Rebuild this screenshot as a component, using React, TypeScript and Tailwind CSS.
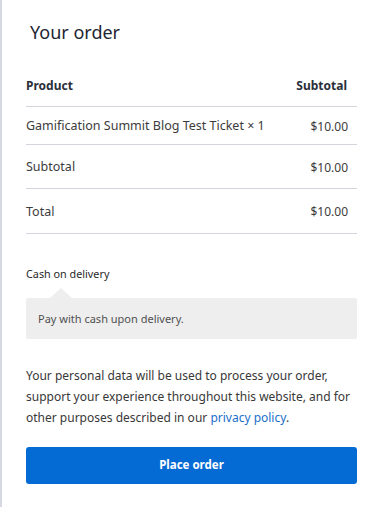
export default function App() {
  return (
    <div className="min-h-[507px] w-[387px] bg-white border-l-2 border-[#d5d8e0] font-['Noto_Sans',sans-serif] text-[#3c3c3c]">
      <div className="pl-[24px] pr-[30px] pt-[18px]">
        <h3 className="pl-[4px] text-[18px] leading-[28px] text-[#1e2533]">Your order</h3>

        <table className="mt-[18px] w-full border-collapse text-[12.5px]">
          <thead>
            <tr className="border-b border-[#d3d4dc]">
              <th className="h-[42px] pt-[2px] text-left text-[12px] font-bold text-[#2a2f3a]">Product</th>
              <th className="h-[42px] pt-[2px] pr-[10px] text-right text-[12px] font-bold text-[#2a2f3a]">Subtotal</th>
            </tr>
          </thead>
          <tbody>
            <tr className="border-b border-[#d3d4dc]">
              <td className="h-[38px] pt-[3px] whitespace-nowrap">Gamification Summit Blog Test Ticket × 1</td>
              <td className="h-[38px] pt-[3px] pr-[9px] text-right text-[12px]">$10.00</td>
            </tr>
          </tbody>
          <tfoot>
            <tr className="border-b border-[#d3d4dc]">
              <td className="h-[44px] pt-[3px]">Subtotal</td>
              <td className="h-[44px] pt-[3px] pr-[9px] text-right text-[12px]">$10.00</td>
            </tr>
            <tr className="border-b border-[#d3d4dc]">
              <td className="h-[45px] pt-[3px]">Total</td>
              <td className="h-[45px] pt-[3px] pr-[9px] text-right text-[12px]">$10.00</td>
            </tr>
          </tfoot>
        </table>

        <div className="mt-[32px] text-[10.8px] leading-[16px] text-[#2a2a2a]">Cash on delivery</div>
        <div className="relative mt-[6px] h-[10px]">
          <div className="absolute left-[24px] bottom-0 h-0 w-0 border-x-[11px] border-b-[10px] border-x-transparent border-b-[#eeeeee]" />
        </div>
        <div className="rounded-[2px] bg-[#eeeeee] px-[12px] py-[12px] text-[11px] leading-[17px] text-[#505050]">
          Pay with cash upon delivery.
        </div>

        <p className="mt-[26px] text-[12px] leading-[21px] text-[#383838]">
          Your personal data will be used to process your order, support your experience throughout this website, and for other purposes described in our{" "}
          <a className="text-[#1a6fc9]">privacy policy</a>.
        </p>

        <button className="mt-[19px] h-[37px] w-full rounded-[3px] bg-[#056bd4] text-[11.5px] font-bold text-white">
          Place order
        </button>
      </div>
    </div>
  );
}
